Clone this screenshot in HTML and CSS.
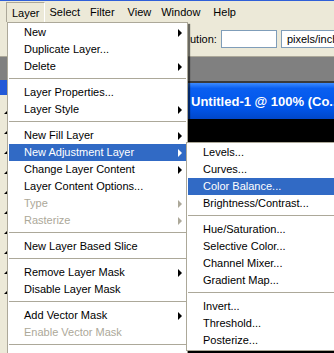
FILE: index.html
```html
<!DOCTYPE html>
<html lang="en">
<head>
  <meta charset="UTF-8" />
  <title>Photoshop - Layer menu</title>
  <link rel="stylesheet" href="styles.css">
</head>
<body>
  <div class="screen">
    <div class="menubar">
      <span class="mb-item open">Layer</span>
      <span class="mb-item">Select</span>
      <span class="mb-item wide">Filter</span>
      <span class="mb-item">View</span>
      <span class="mb-item wide">Window</span>
      <span class="mb-item">Help</span>
    </div>

    <div class="options">
      <span class="opt-label">ution:</span>
      <span class="opt-input"></span>
      <span class="opt-select">pixels/inch</span>
    </div>

    <div class="workspace"></div>

    <div class="doc">
      <div class="doc-title">Untitled-1 @ 100% (Co...</div>
      <div class="doc-canvas"></div>
    </div>

    <div class="toolbox">
      <div class="tb-title"></div>
      <div class="tb-tools">
        <span class="tool"></span>
        <span class="tool"></span>
        <span class="tool"></span>
        <span class="tool"></span>
        <span class="tool"></span>
        <span class="tool"></span>
        <span class="tool"></span>
        <span class="tool"></span>
        <span class="tool"></span>
        <span class="tool"></span>
      </div>
    </div>

    <div class="menu main-menu">
      <div class="item sub">New</div>
      <div class="item">Duplicate Layer...</div>
      <div class="item sub">Delete</div>
      <div class="sep"></div>
      <div class="item">Layer Properties...</div>
      <div class="item sub">Layer Style</div>
      <div class="sep"></div>
      <div class="item sub">New Fill Layer</div>
      <div class="item sub active">New Adjustment Layer</div>
      <div class="item sub">Change Layer Content</div>
      <div class="item">Layer Content Options...</div>
      <div class="item sub disabled">Type</div>
      <div class="item sub disabled">Rasterize</div>
      <div class="sep"></div>
      <div class="item">New Layer Based Slice</div>
      <div class="sep"></div>
      <div class="item sub">Remove Layer Mask</div>
      <div class="item">Disable Layer Mask</div>
      <div class="sep"></div>
      <div class="item sub">Add Vector Mask</div>
      <div class="item disabled">Enable Vector Mask</div>
      <div class="sep"></div>
    </div>

    <div class="menu sub-menu">
      <div class="item">Levels...</div>
      <div class="item">Curves...</div>
      <div class="item active">Color Balance...</div>
      <div class="item">Brightness/Contrast...</div>
      <div class="sep"></div>
      <div class="item">Hue/Saturation...</div>
      <div class="item">Selective Color...</div>
      <div class="item">Channel Mixer...</div>
      <div class="item">Gradient Map...</div>
      <div class="sep"></div>
      <div class="item">Invert...</div>
      <div class="item">Threshold...</div>
      <div class="item">Posterize...</div>
    </div>
  </div>
</body>
</html>
```

FILE: styles.css
```css
body {
  margin: 0;
  font-family: "Liberation Sans", Arial, sans-serif;
  font-size: 11px;
  color: #000;
  background-color: #000;
}

.screen {
  position: relative;
  width: 334px;
  height: 353px;
  overflow: hidden;
  display: flex;
  flex-direction: column;
}

/* menu bar */
.menubar {
  height: 22px;
  flex: none;
  display: flex;
  align-items: stretch;
  padding-left: 6px;
  background-color: #ece9d8;
  border-top: 1px solid #2f5fd8;
  box-sizing: border-box;
}

.mb-item {
  display: flex;
  align-items: center;
  padding: 0 5px;
  white-space: nowrap;
}

.mb-item.wide {
  margin-right: 3px;
}

.mb-item.open {
  border: 1px solid;
  border-color: #aca899 #fff #fff #aca899;
  border-bottom: none;
  padding: 0 4px 0 5px;
  margin-top: 1px;
}

/* options bar */
.options {
  height: 35px;
  flex: none;
  display: flex;
  align-items: center;
  gap: 4px;
  padding-left: 190px;
  background-color: #ece9d8;
  border-bottom: 1px solid #aca899;
  box-sizing: border-box;
  white-space: nowrap;
}

.opt-input {
  width: 54px;
  height: 16px;
  background-color: #fff;
  border: 1px solid #7f9db9;
  flex: none;
}

.opt-select {
  height: 16px;
  line-height: 16px;
  padding-left: 5px;
  width: 80px;
  background-color: #fff;
  border: 1px solid #7f9db9;
  flex: none;
}

.workspace {
  height: 24px;
  flex: none;
  background-color: #808080;
  border-bottom: 2px solid #3a3a3a;
}

/* document window */
.doc {
  flex: 1;
  display: flex;
  flex-direction: column;
}

.doc-title {
  height: 36px;
  flex: none;
  display: flex;
  align-items: center;
  padding-left: 191px;
  color: #fff;
  font-size: 13px;
  font-weight: bold;
  white-space: nowrap;
  background: linear-gradient(#3d8bff, #0a5ff0 15%, #0055ea 70%, #0046c8);
}

.doc-canvas {
  flex: 1;
  background-color: #000;
}

/* tool palette on the left, mostly hidden behind the menu */
.toolbox {
  position: absolute;
  left: 0;
  top: 80px;
  width: 9px;
  bottom: 0;
  display: flex;
  flex-direction: column;
  background-color: #ece9d8;
}

.tb-title {
  height: 15px;
  background-color: #2259d8;
}

.tb-tools {
  display: flex;
  flex-direction: column;
  gap: 17px;
  padding-top: 16px;
}

.tool {
  align-self: flex-end;
  margin-right: 2px;
  width: 0;
  height: 0;
  border-left: 3px solid transparent;
  border-bottom: 3px solid #000;
}

/* menus */
.menu {
  position: absolute;
  background-color: #fff;
  border: 1px solid #aca899;
  padding: 1px;
  box-shadow: 2px 2px 1px rgba(0, 0, 0, 0.55);
}

.main-menu {
  left: 7px;
  top: 22px;
  width: 177px;
  height: 340px;
}

.sub-menu {
  left: 186px;
  top: 142px;
  width: 170px;
}

.item {
  position: relative;
  height: 17px;
  line-height: 17px;
  padding-left: 15px;
  white-space: nowrap;
}

.item.sub::after {
  content: "";
  position: absolute;
  right: 4px;
  top: 5px;
  border-left: 4px solid #000;
  border-top: 4px solid transparent;
  border-bottom: 4px solid transparent;
}

.item.active {
  background-color: #316ac5;
  color: #fff;
}

.item.active.sub::after {
  border-left-color: #fff;
}

.item.disabled {
  color: #aca899;
}

.item.disabled.sub::after {
  border-left-color: #aca899;
}

.sep {
  height: 1px;
  margin: 3px 0 5px;
  background-color: #aca899;
}
```
